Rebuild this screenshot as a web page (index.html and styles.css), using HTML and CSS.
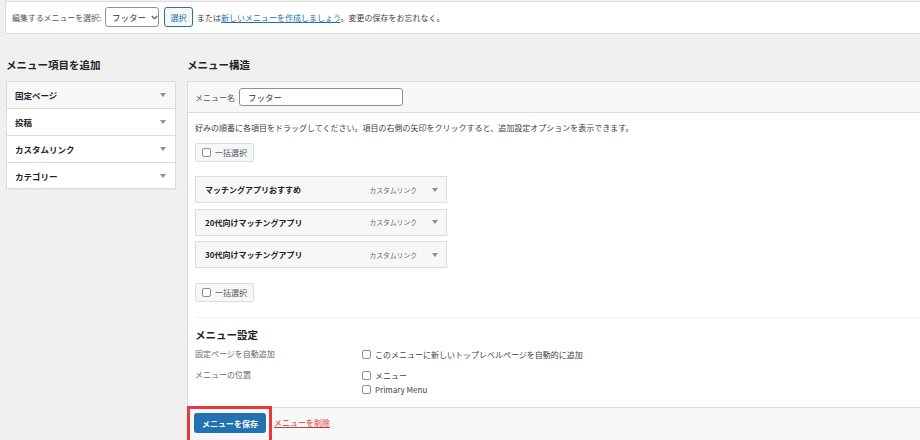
FILE: index.html
```html
<!DOCTYPE html>
<html lang="ja">
<head>
<meta charset="utf-8">
<title>メニュー</title>
<link rel="stylesheet" href="styles.css">
</head>
<body>
<div class="topbar">
  <span class="lbl">編集するメニューを選択:</span>
  <div class="select">フッター<svg class="chev" width="7" height="5" viewBox="0 0 7 5"><path d="M0.8 1 L3.5 3.7 L6.2 1" fill="none" stroke="#50575e" stroke-width="1.2"/></svg></div>
  <span class="btn-sec">選択</span>
  <span class="note">または<a class="link">新しいメニューを作成しましょう</a>。変更の保存をお忘れなく。</span>
</div>
<div class="cols">
  <div class="left">
    <h2 class="title">メニュー項目を追加</h2>
    <div class="acc">
      <div class="acc-row first">固定ページ<i class="tri"></i></div>
      <div class="acc-row">投稿<i class="tri"></i></div>
      <div class="acc-row">カスタムリンク<i class="tri"></i></div>
      <div class="acc-row last">カテゴリー<i class="tri"></i></div>
    </div>
  </div>
  <div class="right">
    <h2 class="title">メニュー構造</h2>
    <div class="box">
      <div class="box-head">
        <span class="name-lbl">メニュー名</span>
        <div class="input">フッター</div>
      </div>
      <div class="box-body">
        <p class="desc">好みの順番に各項目をドラッグしてください。項目の右側の矢印をクリックすると、追加設定オプションを表示できます。</p>
        <div class="bulk"><span class="cb"></span>一括選択</div>
        <ul class="items">
          <li class="item"><span class="item-title">マッチングアプリおすすめ</span><span class="item-meta">カスタムリンク</span><i class="tri"></i></li>
          <li class="item"><span class="item-title">20代向けマッチングアプリ</span><span class="item-meta">カスタムリンク</span><i class="tri"></i></li>
          <li class="item"><span class="item-title">30代向けマッチングアプリ</span><span class="item-meta">カスタムリンク</span><i class="tri"></i></li>
        </ul>
        <div class="bulk bulk2"><span class="cb"></span>一括選択</div>
        <div class="settings">
          <h3 class="set-title">メニュー設定</h3>
          <div class="set-row">
            <div class="set-label">固定ページを自動追加</div>
            <div class="set-opts">
              <div class="opt"><span class="cb"></span>このメニューに新しいトップレベルページを自動的に追加</div>
            </div>
          </div>
          <div class="set-row row2">
            <div class="set-label">メニューの位置</div>
            <div class="set-opts">
              <div class="opt"><span class="cb"></span>メニュー</div>
              <div class="opt"><span class="cb"></span>Primary Menu</div>
            </div>
          </div>
        </div>
      </div>
      <div class="box-foot">
        <span class="btn-primary">メニューを保存</span>
        <a class="del">メニューを削除</a>
        <div class="highlight"></div>
      </div>
    </div>
  </div>
</div>
</body>
</html>
```
FILE: styles.css
```css
* { box-sizing: border-box; }
html, body {
  margin: 0;
  padding: 0;
  background: #f0f0f1;
  overflow: hidden;
  width: 920px;
  height: 440px;
}
body {
  font-family: "Noto Sans CJK JP", "Noto Sans", sans-serif;
  font-size: 8px;
  color: #3c434a;
}
.topbar {
  margin: 1px -12px 0 5px;
  height: 33px;
  background: #fff;
  border: 1px solid #dcdcde;
  display: flex;
  align-items: center;
  padding-left: 6px;
  padding-bottom: 1px;
}
.lbl { color: #50575e; letter-spacing: -0.1px; }
.select {
  margin-left: 4px;
  width: 54px;
  height: 20px;
  border: 1px solid #8c8f94;
  border-radius: 3px;
  background: #fff;
  display: flex;
  align-items: center;
  padding-left: 6px;
  color: #2c3338;
  font-size: 8.5px;
}
.chev { margin-left: 5px; }
.btn-sec {
  margin-left: 5px;
  width: 29px;
  height: 20px;
  border: 1px solid #2271b1;
  border-radius: 3px;
  background: #f6f7f7;
  color: #2271b1;
  display: flex;
  align-items: center;
  justify-content: center;
}
.note { margin-left: 4px; color: #3c434a; }
.link { color: #2271b1; text-decoration: underline; }

.cols {
  display: flex;
  gap: 11px;
  padding: 23px 0 0 6px;
  margin-right: -12px;
}
.left { width: 170px; flex: none; }
.right { flex: 1; }
.title {
  margin: 0 0 8px;
  font-size: 10.5px;
  line-height: 16px;
  font-weight: 700;
  color: #1d2327;
}
.acc {
  margin-top: 1px;
  background: #fff;
  border: 1px solid #dcdcde;
  box-shadow: 0 1px 1px rgba(0,0,0,.04);
}
.acc-row {
  height: 27px;
  border-bottom: 1px solid #dcdcde;
  display: flex;
  align-items: center;
  justify-content: space-between;
  padding: 0 9px 0 8px;
  font-size: 8.5px;
  font-weight: 700;
  color: #1d2327;
}
.acc-row.first { background: #f6f7f7; }
.acc-row.last { border-bottom: none; height: 25px; }
.tri {
  display: block;
  width: 0;
  height: 0;
  border-left: 3px solid transparent;
  border-right: 3px solid transparent;
  border-top: 4px solid #8c8f94;
}

.box {
  background: #fff;
  border: 1px solid #dcdcde;
  border-bottom: none;
  height: 359px;
  display: flex;
  flex-direction: column;
}
.box-head {
  height: 31px;
  flex: none;
  background: #f6f7f7;
  border-bottom: 1px solid #dcdcde;
  display: flex;
  align-items: center;
  padding-left: 7px;
}
.name-lbl { color: #50575e; }
.input {
  margin-left: 4px;
  width: 164px;
  height: 18px;
  border: 1px solid #8c8f94;
  border-radius: 3px;
  background: #fff;
  display: flex;
  align-items: center;
  padding-left: 8px;
  color: #2c3338;
  font-size: 8.5px;
}
.box-body { padding: 0 0 11px 7px; flex: none; }
.desc {
  margin: 9px 0 0;
  line-height: 12px;
  color: #3c434a;
}
.bulk {
  margin-top: 9px;
  width: 59px;
  height: 19px;
  border: 1px solid #dcdcde;
  border-radius: 2px;
  background: #f6f7f7;
  display: flex;
  align-items: center;
  padding-left: 6px;
  color: #50575e;
}
.bulk .cb { margin-right: 4px; }
.bulk2 { margin-top: 15px; }
.cb {
  display: inline-block;
  width: 9px;
  height: 9px;
  border: 1px solid #8c8f94;
  border-radius: 2px;
  background: #fff;
  flex: none;
}
.items {
  list-style: none;
  margin: 14px 0 0;
  padding: 0;
  display: flex;
  flex-direction: column;
  gap: 5.5px;
}
.item {
  width: 252px;
  height: 27px;
  border: 1px solid #dcdcde;
  background: #f6f7f7;
  display: flex;
  align-items: center;
  padding: 0 8px 0 9px;
}
.item-title {
  flex: 1;
  font-weight: 700;
  color: #1d2327;
}
.item-meta {
  font-size: 6.8px;
  color: #646970;
  margin-right: 15px;
}
.settings {
  margin-top: 15px;
  border-top: 1px solid #f0f0f1;
}
.set-title {
  margin: 0;
  padding-top: 9px;
  font-size: 10.5px;
  line-height: 15px;
  font-weight: 700;
  color: #1d2327;
}
.set-row {
  display: flex;
  margin-top: 5px;
}
.set-row.row2 { margin-top: 7px; }
.set-label {
  width: 167px;
  line-height: 14px;
  color: #646970;
}
.opt {
  height: 14px;
  display: flex;
  align-items: center;
  color: #3c434a;
}
.opt .cb { margin-right: 4px; }

.box-foot {
  position: relative;
  flex: 1;
  border-top: 1px solid #dcdcde;
  background: #f6f7f7;
  display: flex;
  align-items: flex-start;
  padding: 5px 0 0 6px;
}
.btn-primary {
  width: 72px;
  height: 20px;
  border-radius: 3px;
  background: #2271b1;
  color: #fff;
  font-weight: 700;
  display: flex;
  align-items: center;
  justify-content: center;
}
.del {
  margin-left: 8px;
  line-height: 20px;
  color: #d63638;
  text-decoration: underline;
}
.highlight {
  position: absolute;
  left: -1px;
  top: -2px;
  bottom: 0;
  width: 85px;
  border: 3px solid #e8383d;
  border-bottom: none;
}
```
